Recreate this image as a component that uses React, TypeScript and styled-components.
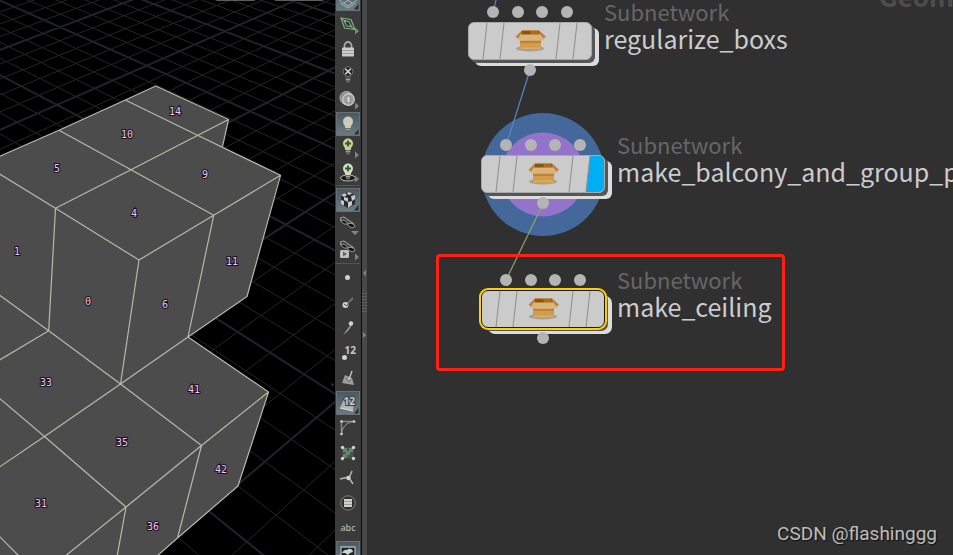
import React from "react";
import styled, { createGlobalStyle, css } from "styled-components";

const GlobalStyle = createGlobalStyle`
  * { box-sizing: border-box; }
  html, body { margin: 0; padding: 0; }
  body {
    background: #303030;
    font-family: "Noto Sans CJK SC", "Noto Sans", sans-serif;
    overflow: hidden;
  }
`;

/* ---------- page frame ---------- */

const Workspace = styled.main`
  display: flex;
  height: 100vh;
  overflow: hidden;
`;

const Viewport = styled.section`
  flex: 335 1 0;
  min-width: 0;
  position: relative;
  background: #000;
  overflow: hidden;
`;

const Scene = styled.svg`
  display: block;
  width: 100%;
  height: 100%;
`;

const Toolbar = styled.nav`
  flex: none;
  width: 26px;
  background: #3a3a3a;
  overflow: hidden;
`;

const ToolStack = styled.div`
  display: flex;
  flex-direction: column;
  align-items: center;
  gap: 1px;
  margin-top: -13px;
`;

const LightGroup = styled.div`
  display: flex;
  flex-direction: column;
`;

const Rule = styled.hr`
  width: 24px;
  height: 1px;
  margin: 0 0 1px;
  border: 0;
  background: #555;
`;

const ToolButton = styled.button<{ $on?: boolean }>`
  flex: none;
  display: block;
  width: 24px;
  height: 24px;
  padding: 0;
  border: 1px solid transparent;
  background: transparent;
  ${(p) =>
    p.$on &&
    css`
      border-color: #687074;
      background: linear-gradient(#4b5960, #6a7b84);
    `}
  svg {
    display: block;
    width: 24px;
    height: 24px;
    margin: -1px;
    opacity: 0.9;
  }
`;

const Splitter = styled.div`
  flex: none;
  width: 6px;
  border-left: 1px solid #0c0c0c;
  background: #484848;
  svg {
    display: block;
    margin-top: 268px;
  }
`;

const Network = styled.section`
  flex: 586 1 0;
  min-width: 0;
  position: relative;
  background: #303030;
  overflow: hidden;
`;

/* ---------- network canvas ---------- */

const Wires = styled.svg`
  position: absolute;
  inset: 0;
  width: 100%;
  height: 100%;
`;

const ContextName = styled.div`
  position: absolute;
  left: 512px;
  top: -22px;
  font-size: 26px;
  line-height: 36px;
  font-weight: 700;
  color: #4d4d4d;
  white-space: nowrap;
`;

const NodeRoot = styled.article<{ $x: number; $y: number }>`
  position: absolute;
  left: ${(p) => p.$x}px;
  top: ${(p) => p.$y}px;
  width: 124px;
  display: flex;
  flex-direction: column;
  align-items: center;
  gap: 4px;
`;

const Inputs = styled.div`
  display: flex;
  justify-content: space-between;
  width: 86px;
`;

const Port = styled.span`
  position: relative;
  width: 12px;
  height: 12px;
  border-radius: 50%;
  background: #b4b4b4;
`;

const NodeBody = styled.div<{ $selected?: boolean }>`
  width: 124px;
  height: 38px;
  border: 1px solid ${(p) => (p.$selected ? "#1c1a10" : "#a8a8a8")};
  border-radius: ${(p) => (p.$selected ? 7 : 6)}px;
  background: #cbcbcb;
  overflow: hidden;
  box-shadow:
    ${(p) => (p.$selected ? "0 0 0 2px #ffd000," : "")}
    3px 3px 0 #565656,
    7px 6px 0 #dcdcdc;
  svg {
    display: block;
    width: 100%;
    height: 100%;
  }
`;

const NodeLabel = styled.div`
  position: absolute;
  left: 136px;
  top: -8px;
  white-space: nowrap;
`;

const NodeType = styled.div`
  font-size: 22px;
  line-height: 26px;
  color: #666;
`;

const NodeName = styled.div`
  font-size: 25px;
  line-height: 28px;
  color: #ccc;
`;

const Highlight = styled.div`
  position: absolute;
  left: 69px;
  top: 254px;
  width: 349px;
  height: 117px;
  border: 3px solid #ff2012;
  border-radius: 4px;
`;

const Watermark = styled.div`
  position: absolute;
  right: 16px;
  bottom: 9px;
  font-family: Roboto, "Liberation Sans", sans-serif;
  font-size: 19px;
  line-height: 24px;
  color: #bdbdbd;
  text-shadow: 1px 1px 1px #111;
`;

/* ---------- ground grid ---------- */

type Pt = [number, number];

/* [column, row, x, y] of known crossings of the heavy grid lines */
const anchors: [number, number, number, number][] = [
  [1, 0, 60, 27],
  [2, 0, 147, 65],
  [3, 0, 250, 112],
  [2, 1, 225, 32],
  [3, 1, 328, 70],
  [2, -1, 57, 105],
  [4, -1, 285, 225],
  [5, -2, 341, 397],
];

function fitPerspective() {
  const rows: number[][] = [];
  anchors.forEach(([u, v, x, y]) => {
    rows.push([u, v, 1, 0, 0, 0, -u * x, -v * x, x]);
    rows.push([0, 0, 0, u, v, 1, -u * y, -v * y, y]);
  });
  const m = Array.from({ length: 8 }, (_, i) =>
    Array.from({ length: 9 }, (_, j) => rows.reduce((s, r) => s + r[i] * r[j], 0)),
  );
  for (let c = 0; c < 8; c++) {
    let p = c;
    for (let r = c + 1; r < 8; r++) if (Math.abs(m[r][c]) > Math.abs(m[p][c])) p = r;
    [m[c], m[p]] = [m[p], m[c]];
    for (let r = 0; r < 8; r++) {
      if (r === c) continue;
      const f = m[r][c] / m[c][c];
      for (let k = c; k < 9; k++) m[r][k] -= f * m[c][k];
    }
  }
  return m.map((r, i) => r[8] / r[i]);
}

const h = fitPerspective();
const depth = (u: number, v: number) => h[6] * u + h[7] * v + 1;
const project = (u: number, v: number): Pt => {
  const w = depth(u, v);
  return [(h[0] * u + h[1] * v + h[2]) / w, (h[3] * u + h[4] * v + h[5]) / w];
};

function gridPath(major: boolean) {
  const parts: string[] = [];
  const trace = (at: (t: number) => Pt) => {
    let pen = false;
    for (let t = -8; t <= 9; t += 0.25) {
      const [u, v] = at(t);
      if (depth(u, v) < 0.05) {
        pen = false;
        continue;
      }
      const [x, y] = project(u, v);
      parts.push(`${pen ? "L" : "M"}${x.toFixed(1)} ${y.toFixed(1)}`);
      pen = true;
    }
  };
  for (let k = -35; k <= 45; k++) {
    if ((k % 5 === 0) !== major) continue;
    trace((t) => [k / 5, t]);
    trace((t) => [t, k / 5]);
  }
  return parts.join("");
}

const minorGrid = gridPath(false);
const majorGrid = gridPath(true);

const faceNumbers: [string, number, number][] = [
  ["14", 175, 115],
  ["10", 127, 138],
  ["5", 57, 172],
  ["9", 205, 178],
  ["4", 134, 217],
  ["1", 17, 255],
  ["11", 232, 265],
  ["0", 88, 305],
  ["6", 165, 308],
  ["33", 46, 386],
  ["41", 194, 393],
  ["35", 122, 446],
  ["42", 221, 473],
  ["31", 41, 507],
  ["36", 153, 530],
];

const FaceNumber = styled.text`
  font-family: "DejaVu Sans Mono", monospace;
  font-size: 10px;
  text-anchor: middle;
  fill: #f6c6fb;
  stroke: #151015;
  stroke-width: 2px;
  paint-order: stroke;
`;

const SceneView = () => (
  <Scene viewBox="0 0 335 555" preserveAspectRatio="xMinYMin slice" role="img" aria-label="3D view">
    <path d={minorGrid} fill="none" stroke="#232528" strokeWidth="1" />
    <path d={majorGrid} fill="none" stroke="#1e2429" strokeWidth="2" />
    <path d="M331 383l2 3m-2 0l3-2" stroke="#3a2f55" fill="none" />
    <path d="M215 0h41l-2 1h-37zM274 0h50l-2 1h-46z" fill="#5c5c5c" />
    <path
      d="M-2 157L59 130 125 100 156 86 228 120 222 147 280 175 247 296 188 337 268 392 238 486 158 555V560H-2z"
      fill="#4c4c4c"
    />
    <path
      fill="none"
      stroke="#b9b9a6"
      strokeWidth="1.2"
      strokeLinejoin="round"
      d="M-2 157L59 130.300 125.300 100 155.700 86 228.500 119.500 222.500 146.500M125.300 100L197.500 135.300 280.500 175.300 247 296.500 188 337 120.500 384 44.500 436.500-2 468M228.500 119.500L131 169.700 55.500 208.300M59 130.300L131 169.700 213.700 215.300 280.500 175.300M-2 173L55.500 208.300 139 260 213.700 215.300 188 337 268.500 392 201.500 445.500 126 507 64 557M55.500 208.300L48.700 330.700-2 361M139 260L120.500 384M-2 294L48.700 330.700 120.500 384 201.500 445.500 177.500 538M-2 397L44.500 436.500 126 507 117 557M268.500 392L238 486 177.500 538 156 557M-2 535L20 557"
    />
    {faceNumbers.map(([n, x, y]) => (
      <FaceNumber key={n} x={x} y={y}>
        {n}
      </FaceNumber>
    ))}
  </Scene>
);

/* ---------- toolbar icons ---------- */

const More = () => <path d="M19 15.500l4 3.500-4 3.500z" fill="#8d8d8d" />;
const MoreDark = () => <path d="M22.500 17v5.500H18z" fill="#20272b" />;

const Bulb = ({ fill, y = 0 }: { fill: string; y?: number }) => (
  <g transform={`translate(0 ${y})`}>
    <path d="M12 4.500a5 5 0 0 1 5 5c0 2.500-2 3.500-2.400 6.500H9.400C9 13 7 12 7 9.500a5 5 0 0 1 5-5z" fill={fill} />
    <path d="M9.800 16h4.400v3.500L12 21l-2.200-1.500z" fill="#6c6c6c" />
    <path d="M9.800 17.500h4.400" stroke="#bbb" strokeWidth=".8" />
  </g>
);

const Cross = ({ y }: { y: number }) => (
  <path d={`M12 ${y - 3}v6M9 ${y}h6`} stroke="#23602f" strokeWidth="1.800" />
);

const Glasses = ({ y = 0 }: { y?: number }) => (
  <g transform={`translate(0 ${y})`}>
    <path d="M5 9.500L4.500 6.500C6 4.500 8 5 10 6.500L18 12" fill="none" stroke="#9c9c9c" strokeWidth="1.300" />
    <path d="M5 8.500c2-1 5 0 6.500 2.500-1 2-4.500 1.500-6.500-2.500z" fill="#0e0e0e" stroke="#b4b4b4" />
    <path d="M11.500 12c2-1.500 6-.5 7.500 2-1 2.500-5.500 2.500-7.500-2z" fill="#0e0e0e" stroke="#c4c4c4" />
  </g>
);

const IconText = styled.text`
  font-family: "Noto Sans", sans-serif;
  fill: #d6d6d0;
`;

const Ball = ({ x, y, r = 2.5 }: { x: number; y: number; r?: number }) => (
  <circle cx={x} cy={y} r={r} fill="#e4e4dc" />
);

const icons: Record<string, React.ReactNode> = {
  display: (
    <>
      <path d="M3 13l9-4 9 4-9 6zM7.500 11l9 5M16.500 11l-9 5M4 16l8 5 8-5" fill="none" stroke="#b9c2c4" strokeWidth=".9" />
      <MoreDark />
    </>
  ),
  plane: (
    <>
      <path d="M5 6l10 1.500 4 10-10.500-1.500z" fill="#27432a" stroke="#8fb88a" strokeWidth="1.200" />
      <path d="M8 8.500l5 1 2.500 5-5-.5zM5 6l5 4M14 14l5 3.500" fill="none" stroke="#a9b8a4" />
      <More />
    </>
  ),
  lock: (
    <>
      <path d="M8.500 11V8.500a3.500 3.500 0 0 1 7 0V11" fill="none" stroke="#b5b5b5" strokeWidth="1.800" />
      <rect x="6" y="10.500" width="12" height="9" rx="1" fill="#deded8" />
      <path d="M6 13.500h12M6 16.500h12" stroke="#a5a5a0" strokeWidth=".9" />
    </>
  ),
  noLight: (
    <>
      <Bulb fill="#55554f" />
      <circle cx="12" cy="9.500" r="4.800" fill="#242424" stroke="#777" />
      <path d="M9.200 6.700l5.600 5.600M14.800 6.700l-5.600 5.600" stroke="#e4e4e4" strokeWidth="1.600" />
    </>
  ),
  headlight: (
    <>
      <circle cx="10.500" cy="11" r="6.500" fill="#8b9391" stroke="#c5c5c0" />
      <circle cx="12.500" cy="12.500" r="5.800" fill="#a9aaa5" stroke="#e2e2dd" strokeWidth="1.200" />
      <path d="M11 9.500h3v6h-3z" fill="#ecece7" stroke="#888" strokeWidth=".6" />
      <More />
    </>
  ),
  light: (
    <>
      <Bulb fill="#d9d7bf" />
      <MoreDark />
    </>
  ),
  addLight: (
    <>
      <Bulb fill="#dfe1a0" y={-2} />
      <Cross y={7.5} />
      <More />
    </>
  ),
  addEnvLight: (
    <>
      <ellipse cx="12" cy="18" rx="7.500" ry="3" fill="#161616" stroke="#c8c8c8" />
      <Bulb fill="#ecedd0" y={-1} />
      <Cross y={8.5} />
      <More />
    </>
  ),
  shading: (
    <>
      <path d="M5 7l7-3 7 3v9l-7 4-7-4z" fill="#232323" />
      <path d="M5 7l4-1.700 2 1.700-3 2zM12 4l4 1.300L14 7l-3-1zM15 8l4-1v4l-3 2zM8 9l4 1v4l-4-2zM5 12l3 1v4.500l-3-1.500zM12 14l4-1v4l-4 3z" fill="#d4d4d4" />
      <MoreDark />
    </>
  ),
  visibility: (
    <>
      <Glasses y={-1} />
      <path d="M15 18h8l-4 4z" fill="#8d8d8d" />
    </>
  ),
  renderView: (
    <>
      <Glasses y={-2} />
      <rect x="4" y="12" width="9" height="8" rx="1.500" fill="#d0d0d0" />
      <path d="M7 13.500l4 2.500-4 2.500z" fill="#666" />
      <More />
    </>
  ),
  points: <Ball x={11.5} y={11.5} />,
  pointNormals: (
    <>
      <path d="M10 14l7-7" stroke="#777" strokeWidth="1.800" />
      <Ball x={9.5} y={14} r={3} />
      <path d="M8 13l3 2 2-4" fill="none" stroke="#555" />
    </>
  ),
  pointTrails: (
    <>
      <path d="M15 8l-8 11 5-4 4-6z" fill="#a5a59d" />
      <Ball x={15} y={7.5} r={2.2} />
    </>
  ),
  pointNumbers: (
    <>
      <IconText x="8.500" y="13" fontSize="10" fontWeight="700">
        12
      </IconText>
      <Ball x={8.5} y={16.500} />
    </>
  ),
  primNormals: (
    <>
      <path d="M9 9l7 3 2 7-12-2z" fill="#a9a9a1" />
      <path d="M12.500 15L16 5" stroke="#e0e0da" strokeWidth="1.300" />
      <path d="M10 12l3 4 2-3" fill="none" stroke="#6a6a66" />
    </>
  ),
  primNumbers: (
    <>
      <path d="M9 6l9 5-1 9-13-3z" fill="#b9bcb8" />
      <path d="M4 17l13 3" stroke="#eee" />
      <IconText x="7.500" y="14" fontSize="10" fontWeight="700" stroke="#333b3f" strokeWidth="2" paintOrder="stroke">
        12
      </IconText>
      <MoreDark />
    </>
  ),
  hulls: (
    <>
      <path d="M5.500 18V5.500H18" fill="none" stroke="#8f9690" strokeWidth="1.400" />
      <path d="M5.500 18C6 11 11 6 18 5.500" fill="none" stroke="#a8aca6" />
      <Ball x={5.5} y={5.5} r={1.3} />
      <Ball x={18} y={5.5} r={1.3} />
      <Ball x={5.5} y={18} r={1.3} />
    </>
  ),
  uvBackdrop: (
    <>
      <path d="M6.500 6.500h11v11h-11z" fill="#3f5f47" />
      <path d="M7 7h4v4H7zM13 7h4v4h-4zM10 10h4v4h-4zM7 13h4v4H7z" fill="#76877a" />
      <Ball x={6.5} y={6.5} r={1.7} />
      <Ball x={17.5} y={6.5} r={1.7} />
      <Ball x={6.5} y={17.5} r={1.7} />
      <Ball x={17.5} y={17.5} r={1.7} />
    </>
  ),
  axes: (
    <>
      <path d="M4 13l9-2M13 12l3-7M13 12l4 6" stroke="#c6c6c0" strokeWidth="1.500" />
      <Ball x={12.5} y={12} r={2.2} />
    </>
  ),
  overlay: (
    <>
      <circle cx="12" cy="12" r="7.200" fill="#303030" stroke="#8c8c8c" />
      <path d="M8 8h8v8H8z" fill="#e1e1dc" />
      <path d="M8 10.500h8M8 13.500h8" stroke="#999" strokeWidth=".8" />
    </>
  ),
  text: (
    <IconText x="12" y="15" fontSize="9" textAnchor="middle">
      abc
    </IconText>
  ),
  image: (
    <>
      <path d="M5 6h14v14H5z" fill="#161b1e" stroke="#b4babb" strokeWidth="1.300" />
      <path d="M6 12c1-2 3-4 5-3 3-3 6 0 6 2l-3 1-2 2-3-2z" fill="#dedfd8" />
    </>
  ),
};

const Tool = ({ icon, label, on }: { icon: string; label: string; on?: boolean }) => (
  <ToolButton type="button" $on={on} aria-label={label} aria-pressed={!!on}>
    <svg viewBox="0 0 24 24" aria-hidden="true">
      {icons[icon]}
    </svg>
  </ToolButton>
);

const DisplayToolbar = () => (
  <Toolbar aria-label="Display options">
    <ToolStack>
      <Tool icon="display" label="Display grid" on />
      <Tool icon="plane" label="Construction plane" />
      <Tool icon="lock" label="Lock camera" />
      <Tool icon="noLight" label="Disable lighting" />
      <Tool icon="headlight" label="Headlight" />
      <LightGroup>
        <Tool icon="light" label="Normal lighting" on />
        <Tool icon="addLight" label="High quality lighting" />
        <Tool icon="addEnvLight" label="Lighting with shadows" />
      </LightGroup>
      <Rule />
      <Tool icon="shading" label="Shading" on />
      <Tool icon="visibility" label="Visibility" />
      <Tool icon="renderView" label="Render view" />
      <Rule />
      <Tool icon="points" label="Points" />
      <Tool icon="pointNormals" label="Point normals" />
      <Tool icon="pointTrails" label="Point trails" />
      <Tool icon="pointNumbers" label="Point numbers" />
      <Tool icon="primNormals" label="Primitive normals" />
      <Tool icon="primNumbers" label="Primitive numbers" on />
      <Tool icon="hulls" label="Primitive hulls" />
      <Tool icon="uvBackdrop" label="UV backdrop" />
      <Tool icon="axes" label="Origin axes" />
      <Tool icon="overlay" label="Group list" />
      <Tool icon="text" label="Text overlay" />
      <Tool icon="image" label="Background image" on />
    </ToolStack>
  </Toolbar>
);

const SplitHandle = () => (
  <Splitter role="separator" aria-orientation="vertical">
    <svg width="5" height="76" viewBox="0 0 5 76" aria-hidden="true">
      <path d="M4 2v6L1 5zM1 64v6l3-3z" fill="#858585" />
      <path d="M1 25v21M4 25v21" stroke="#858585" strokeDasharray="1 2" />
    </svg>
  </Splitter>
);

/* ---------- network nodes ---------- */

const BodyArt = ({ displayed }: { displayed?: boolean }) => (
  <svg viewBox="1 1 122 36" aria-hidden="true">
    {displayed && <path d="M109 1h14v36h-18z" fill="#00aef3" />}
    <path d="M19 1l-4 36M36 1l-4 36M92 1l-4 36M109 1l-4 36" stroke="#8e8e8e" strokeWidth="1" />
    <ellipse cx="62" cy="26.500" rx="14" ry="3" fill="#777" opacity=".5" />
    <path d="M52 16h21v10l-1 2H53l-1-2z" fill="#d09c4e" />
    <path d="M52 19h21v2H52z" fill="#bd8438" />
    <path d="M53 25.500h19v1.500H53z" fill="#e0ad5f" />
    <path d="M54 8.500h17l2.500 5h-22z" fill="#8a560f" />
    <path d="M62 9h8l1 3.500h-8z" fill="#a96f20" />
    <path d="M54 8.200l-6.500 6.500 2.500 2 3.500-4zM71 8.200l7 6.500-2.500 2-4-4z" fill="#b9843f" />
    <path d="M52.500 12.500h20L76 18.500H49.500z" fill="#dbb47c" />
    <path d="M54 8.500h17" stroke="#c98d3a" strokeWidth="1" />
  </svg>
);

type NodeProps = { name: string; x: number; y: number; displayed?: boolean; selected?: boolean };

const NetworkNode = ({ name, x, y, displayed, selected }: NodeProps) => (
  <NodeRoot $x={x} $y={y}>
    <Inputs>
      <Port />
      <Port />
      <Port />
      <Port />
    </Inputs>
    <NodeBody $selected={selected}>
      <BodyArt displayed={displayed} />
    </NodeBody>
    <Port />
    <NodeLabel>
      <NodeType>Subnetwork</NodeType>
      <NodeName>{name}</NodeName>
    </NodeLabel>
  </NodeRoot>
);

export default function App() {
  return (
    <>
      <GlobalStyle />
      <Workspace>
        <Viewport>
          <SceneView />
        </Viewport>
        <DisplayToolbar />
        <SplitHandle />
        <Network>
          <ContextName>Geometry</ContextName>
          <Wires aria-hidden="true">
            <circle cx="176" cy="174.500" r="61.500" fill="#45689a" />
            <circle cx="176" cy="174.500" r="42" fill="#9474cb" />
            <path d="M130 -4L126 12M163 70L139 146" stroke="#5288c8" strokeWidth="1.200" />
            <path d="M176 204L139 280" stroke="#8ba468" strokeWidth="1.200" />
          </Wires>
          <NetworkNode name="regularize_boxs" x={101} y={6} />
          <NetworkNode name="make_balcony_and_group_polygons" x={114} y={139} displayed />
          <NetworkNode name="make_ceiling" x={114} y={274} selected />
          <Highlight />
          <Watermark>CSDN @flashinggg</Watermark>
        </Network>
      </Workspace>
    </>
  );
}
